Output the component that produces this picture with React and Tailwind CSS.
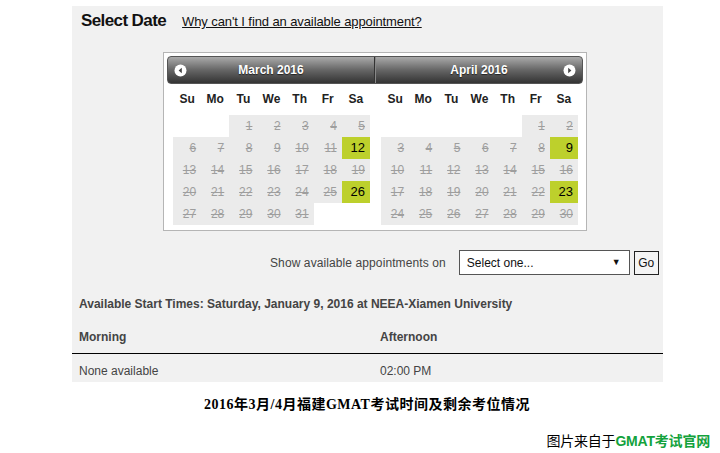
import React from "react";

const march = { name: "March 2016", lead: 2, days: 31, open: [12, 26] };
const april = { name: "April 2016", lead: 5, days: 30, open: [9, 23] };
const weekDays = ["Su", "Mo", "Tu", "We", "Th", "Fr", "Sa"];

const Arrow = ({ dir }) => (
  <svg width="13" height="13" viewBox="0 0 13 13">
    <circle cx="6.5" cy="6.5" r="6" fill="#fff" />
    {dir === "left" ? (
      <path d="M7.8 3.8 L4.6 6.5 L7.8 9.2 Z" fill="#444" />
    ) : (
      <path d="M5.2 3.8 L8.4 6.5 L5.2 9.2 Z" fill="#444" />
    )}
  </svg>
);

const MonthGrid = ({ month }) => {
  const cells = [];
  for (let i = 0; i < month.lead; i++) cells.push(null);
  for (let d = 1; d <= month.days; d++) cells.push(d);
  while (cells.length % 7 !== 0) cells.push(null);

  return (
    <div className="w-[208px] px-[6px]">
      <div className="grid grid-cols-7 w-[197px] h-[31px] items-center pb-[1px]">
        {weekDays.map((w) => (
          <div key={w} className="text-center text-[12px] font-bold text-[#222]">
            {w}
          </div>
        ))}
      </div>
      <div className="grid grid-cols-7 w-[197px]">
        {cells.map((d, i) => {
          if (d === null) return <div key={i} className="h-[22px] bg-white" />;
          const open = month.open.includes(d);
          return (
            <div
              key={i}
              className={`h-[22px] flex items-center justify-end pr-[5px] ${
                open
                  ? "bg-[#bdd02c] text-black text-[13px]"
                  : "bg-[#ebebeb] text-[#9e9e9e] text-[12px] line-through"
              }`}
            >
              {d}
            </div>
          );
        })}
      </div>
    </div>
  );
};

export default function App() {
  return (
    <div className="w-[720px] h-[453px] bg-white font-['Liberation_Sans',Arial,sans-serif] text-[#333]">
      <div className="h-[6px]" />
      <div className="ml-[72px] w-[591px] h-[376px] bg-[#f1f1f1] flex flex-col">
        {/* Header */}
        <div className="flex items-baseline pl-[9px] pt-[2px] h-[46px]">
          <span className="text-[17px] font-bold text-[#111] tracking-[-0.6px]">
            Select Date
          </span>
          <a className="ml-[16px] text-[13px] tracking-[-0.1px] text-[#111] underline">
            Why can't I find an available appointment?
          </a>
        </div>

        {/* Calendar */}
        <div className="ml-[91px] w-[424px] bg-white border border-[#b5b5b5] p-[3px] pb-[5px]">
          <div className="flex h-[28px] rounded-[4px] border border-[#555] bg-gradient-to-b from-[#ababab] via-[#666] to-[#343434] text-white">
            <div className="w-[207px] flex items-center px-[6px] border-r border-[#333]">
              <Arrow dir="left" />
              <span className="flex-1 text-center text-[12px] font-bold pr-[13px] [text-shadow:0_1px_1px_#222]">
                March 2016
              </span>
            </div>
            <div className="flex-1 flex items-center px-[6px] border-l border-[#888]">
              <span className="flex-1 text-center text-[12px] font-bold pl-[13px] [text-shadow:0_1px_1px_#222]">
                April 2016
              </span>
              <Arrow dir="right" />
            </div>
          </div>
          <div className="flex">
            <MonthGrid month={march} />
            <MonthGrid month={april} />
          </div>
        </div>

        {/* Select row */}
        <div className="flex items-center mt-[19px] ml-[198px] h-[25px]">
          <span className="text-[12px] text-[#444] tracking-[0.1px]">Show available appointments on</span>
          <div className="ml-[13px] w-[171px] h-[25px] bg-white border border-[#555] flex items-center justify-between pl-[7px] pr-[8px]">
            <span className="text-[12px] text-[#111]">Select one...</span>
            <span className="text-[9px] text-[#111]">▼</span>
          </div>
          <div className="ml-[4px] w-[25px] h-[24px] border border-[#222] bg-[#f4f4f4] flex items-center justify-center text-[12px] text-[#111]">
            Go
          </div>
        </div>

        {/* Available times */}
        <div className="mt-[19px] pl-[7px] text-[12px] font-bold text-[#444] h-[19px] flex items-center">
          Available Start Times: Saturday, January 9, 2016 at NEEA-Xiamen University
        </div>
        <div className="flex mt-[14px] h-[19px] items-center text-[12px] font-bold text-[#444]">
          <div className="w-[308px] pl-[7px]">Morning</div>
          <div>Afternoon</div>
        </div>
        <div className="mt-[7px] border-t border-black" />
        <div className="flex mt-[7px] h-[19px] items-center text-[12px] text-[#444]">
          <div className="w-[308px] pl-[7px]">None available</div>
          <div>02:00 PM</div>
        </div>
      </div>

      {/* Captions */}
      <div className="pl-[204px] mt-[14px] text-[14px] font-bold text-black tracking-[0.5px] font-['Liberation_Serif','Noto_Sans_CJK_SC',serif] leading-[18px]">
        2016年3月/4月福建GMAT考试时间及剩余考位情况
      </div>
      <div className="flex justify-end pr-[10px] mt-[18px] text-[14px] leading-[18px] tracking-[-0.2px] font-['Liberation_Sans','Noto_Sans_CJK_SC',sans-serif]">
        <span className="text-black">图片来自于</span>
        <span className="text-[#13a23c] font-bold">GMAT考试官网</span>
      </div>
    </div>
  );
}
